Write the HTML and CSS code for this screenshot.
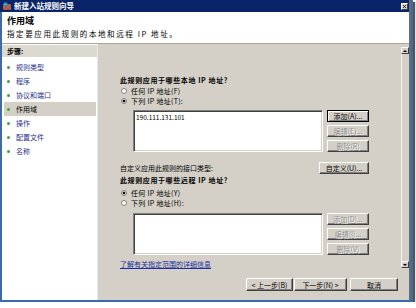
FILE: index.html
```html
<!DOCTYPE html>
<html lang="zh-CN">
<head>
    <meta charset="UTF-8">
    <title>新建入站规则向导</title>
    <link rel="stylesheet" href="styles.css">
</head>
<body>
<div class="frame">
    <div class="window">
        <div class="titlebar">
            <svg class="app-icon" viewBox="0 0 8 8">
                <rect x="0" y="2" width="8" height="6" fill="#a4432a"/>
                <path d="M0 4h8M0 6h8M3 2v2M6 2v2M1 4v2M5 4v2M3 6v2M7 6v2" stroke="#d9957a" stroke-width=".5"/>
                <circle cx="2.6" cy="2.6" r="2.3" fill="#3a7fd0"/>
                <path d="M1 2.4h3" stroke="#7cc24a" stroke-width="1"/>
            </svg>
            <span class="title">新建入站规则向导</span>
            <span class="close">
                <svg viewBox="0 0 7 7"><path d="M1.5 1.5l4 4M5.5 1.5l-4 4" stroke="#000" stroke-width="1.1"/></svg>
            </span>
        </div>

        <div class="header">
            <h1>作用域</h1>
            <p>指定要应用此规则的本地和远程 IP 地址。</p>
        </div>

        <div class="body">
            <div class="steps">
                <div class="steps-head">步骤:</div>
                <ul>
                    <li>规则类型</li>
                    <li>程序</li>
                    <li>协议和端口</li>
                    <li class="active">作用域</li>
                    <li>操作</li>
                    <li>配置文件</li>
                    <li>名称</li>
                </ul>
            </div>

            <div class="main">
                <div class="pane">
                    <div class="content">
                        <div class="question">此规则应用于哪些本地 IP 地址?</div>
                        <div class="radios">
                            <div class="radio"><span class="dot"></span>任何 IP 地址(F)</div>
                            <div class="radio"><span class="dot checked"></span>下列 IP 地址(T):</div>
                        </div>
                        <div class="list-row">
                            <div class="listbox"><div class="entry">190.111.131.101</div></div>
                            <div class="list-buttons">
                                <button class="btn default">添加(A)...</button>
                                <button class="btn" disabled>编辑(E)...</button>
                                <button class="btn" disabled>删除(R)</button>
                            </div>
                        </div>

                        <div class="iface">
                            <span>自定义应用此规则的接口类型:</span>
                            <button class="btn iface-btn">自定义(U)...</button>
                        </div>

                        <div class="question second">此规则应用于哪些远程 IP 地址?</div>
                        <div class="radios second">
                            <div class="radio"><span class="dot checked"></span>任何 IP 地址(Y)</div>
                            <div class="radio"><span class="dot"></span>下列 IP 地址(H):</div>
                        </div>
                        <div class="list-row second">
                            <div class="listbox"></div>
                            <div class="list-buttons">
                                <button class="btn" disabled>添加(D)...</button>
                                <button class="btn" disabled>编辑(I)...</button>
                                <button class="btn" disabled>删除(V)</button>
                            </div>
                        </div>

                        <a class="more" href="#">了解有关指定范围的详细信息</a>
                    </div>
                    <div class="scrollbar">
                        <span class="sb-btn up"></span>
                        <span class="sb-track"></span>
                        <span class="sb-btn down"></span>
                    </div>
                </div>

                <div class="actions">
                    <button class="btn back">&lt; 上一步(B)</button>
                    <button class="btn next">下一步(N) &gt;</button>
                    <button class="btn cancel">取消</button>
                </div>
            </div>
        </div>
    </div>
</div>
</body>
</html>
```

FILE: styles.css
```css
*{
    box-sizing: border-box;
    margin: 0;
    padding: 0;
}
body{
    margin: 0;
    background: #fff;
    font-family: "Noto Sans CJK SC", "Liberation Sans", sans-serif;
    font-size: 7px;
    color: #000;
}
.frame{
    width: 413px;
    height: 302px;
    border: 2px solid #3a6ab0;
    border-top: 0;
    box-shadow: 2px 2px 1px #555;
    background: #d4d0c8;
}
.window{
    height: 300px;
    display: flex;
    flex-direction: column;
    border-right: 2px solid #6b6b6b;
}

/* title bar */
.titlebar{
    height: 12px;
    background: #0a246a;
    display: flex;
    align-items: center;
    padding: 0 1px 0 1px;
    margin-left: -2px;
}
.app-icon{
    width: 8px;
    height: 8px;
    margin: 0 3px 0 2px;
}
.title{
    color: #fff;
    font-weight: bold;
    font-size: 7.5px;
    line-height: 12px;
    flex: 1;
}
.close{
    width: 7px;
    height: 7px;
    background: #d4d0c8;
    border: 1px solid;
    border-color: #fff #404040 #404040 #fff;
    display: flex;
}
.close svg{
    width: 5px;
    height: 5px;
}

/* header */
.header{
    height: 32px;
    background: #fff;
    border-bottom: 1px solid #aca899;
    padding: 4px 0 0 5px;
}
.header h1{
    font-size: 9px;
    line-height: 10px;
    font-weight: bold;
}
.header p{
    margin-top: 3px;
    line-height: 10px;
    font-size: 7.5px;
    letter-spacing: 1.6px;
}

/* body */
.body{
    flex: 1;
    display: flex;
}
.steps{
    width: 96px;
    background: #fff;
    border-right: 1px solid #e8e8e8;
}
.steps-head{
    margin-top: 1px;
    height: 12px;
    line-height: 12px;
    background: #dcd9d1;
    padding-left: 5px;
    font-weight: bold;
}
.steps ul{
    list-style: none;
    margin-top: 3px;
}
.steps li{
    position: relative;
    height: 14px;
    line-height: 14px;
    padding-left: 12px;
    margin: 0 1px 0 2px;
    color: #1f2f8c;
}
.steps li::before{
    content: "";
    position: absolute;
    left: 3px;
    top: 6px;
    width: 3px;
    height: 3px;
    border-radius: 50%;
    background: #3aa43a;
}
.steps li.active{
    background: #d4d0c8;
    color: #000;
}

.main{
    flex: 1;
    display: flex;
    flex-direction: column;
}
.pane{
    height: 225px;
    display: flex;
}
.content{
    flex: 1;
    padding: 31px 32px 0 22px;
}
.question{
    font-weight: bold;
    line-height: 10px;
    letter-spacing: 0.6px;
}
.question.second{
    margin-top: 1px;
}
.radios{
    margin-top: 1px;
    letter-spacing: 0.3px;
}
.radios.second{
    margin-top: 3px;
}
.radio{
    height: 10px;
    line-height: 10px;
    display: flex;
    align-items: center;
}
.dot{
    width: 6px;
    height: 6px;
    border-radius: 50%;
    border: 1px solid #808080;
    background: #fff;
    margin: 0 4px 0 1px;
}
.dot.checked{
    background: radial-gradient(circle, #000 1.2px, #fff 1.7px);
}
.list-row{
    display: flex;
    gap: 4px;
    margin-top: 4px;
    padding-left: 13px;
}
.list-row.second{
    margin-top: 5px;
}
.listbox{
    width: 190px;
    height: 42px;
    background: #fff;
    border: 1px solid;
    border-color: #808080 #fff #fff #808080;
    box-shadow: inset 1px 1px #404040, inset -1px -1px #d4d0c8;
}
.entry{
    padding: 2px 0 0 2px;
    font-size: 6.5px;
    line-height: 8px;
}
.list-buttons{
    width: 42px;
    display: flex;
    flex-direction: column;
    gap: 3px;
}

.btn{
    font-family: inherit;
    font-size: 7px;
    height: 12px;
    line-height: 10px;
    background: #d4d0c8;
    color: #000;
    border: 1px solid;
    border-color: #fff #404040 #404040 #fff;
    box-shadow: inset -1px -1px #808080;
    text-align: center;
    padding: 0;
}
.btn.default{
    border-color: #000;
    box-shadow: inset 1px 1px #fff, inset -1px -1px #808080;
}
.btn:disabled{
    color: #8c8c8c;
    text-shadow: 1px 1px #fff;
}

.iface{
    margin-top: 10px;
    height: 12px;
    display: flex;
    justify-content: space-between;
    align-items: center;
}
.iface-btn{
    width: 50px;
}
.more{
    display: block;
    margin-top: 4px;
    line-height: 10px;
    color: #1f2fa0;
    text-decoration: underline;
}

/* scroll bar */
.scrollbar{
    width: 8px;
    display: flex;
    flex-direction: column;
    padding: 3px 0 1px;
}
.sb-track{
    flex: 1;
    border-left: 1px solid #f4f3ef;
}
.sb-btn{
    height: 7px;
    background: #d4d0c8;
    border: 1px solid;
    border-color: #fff #404040 #404040 #fff;
    display: flex;
    align-items: center;
    justify-content: center;
}
.sb-btn::after{
    content: "";
    border-left: 2px solid transparent;
    border-right: 2px solid transparent;
}
.sb-btn.up::after{
    border-bottom: 2px solid #000;
}
.sb-btn.down::after{
    border-top: 2px solid #000;
}

/* wizard buttons */
.actions{
    flex: 1;
    display: flex;
    justify-content: flex-end;
    align-items: flex-start;
    padding: 9px 11px 0 0;
}
.actions .btn{
    height: 13px;
}
.back{
    width: 47px;
}
.next{
    width: 53px;
    margin-left: 1px;
}
.cancel{
    width: 48px;
    margin-left: 3px;
}
```
